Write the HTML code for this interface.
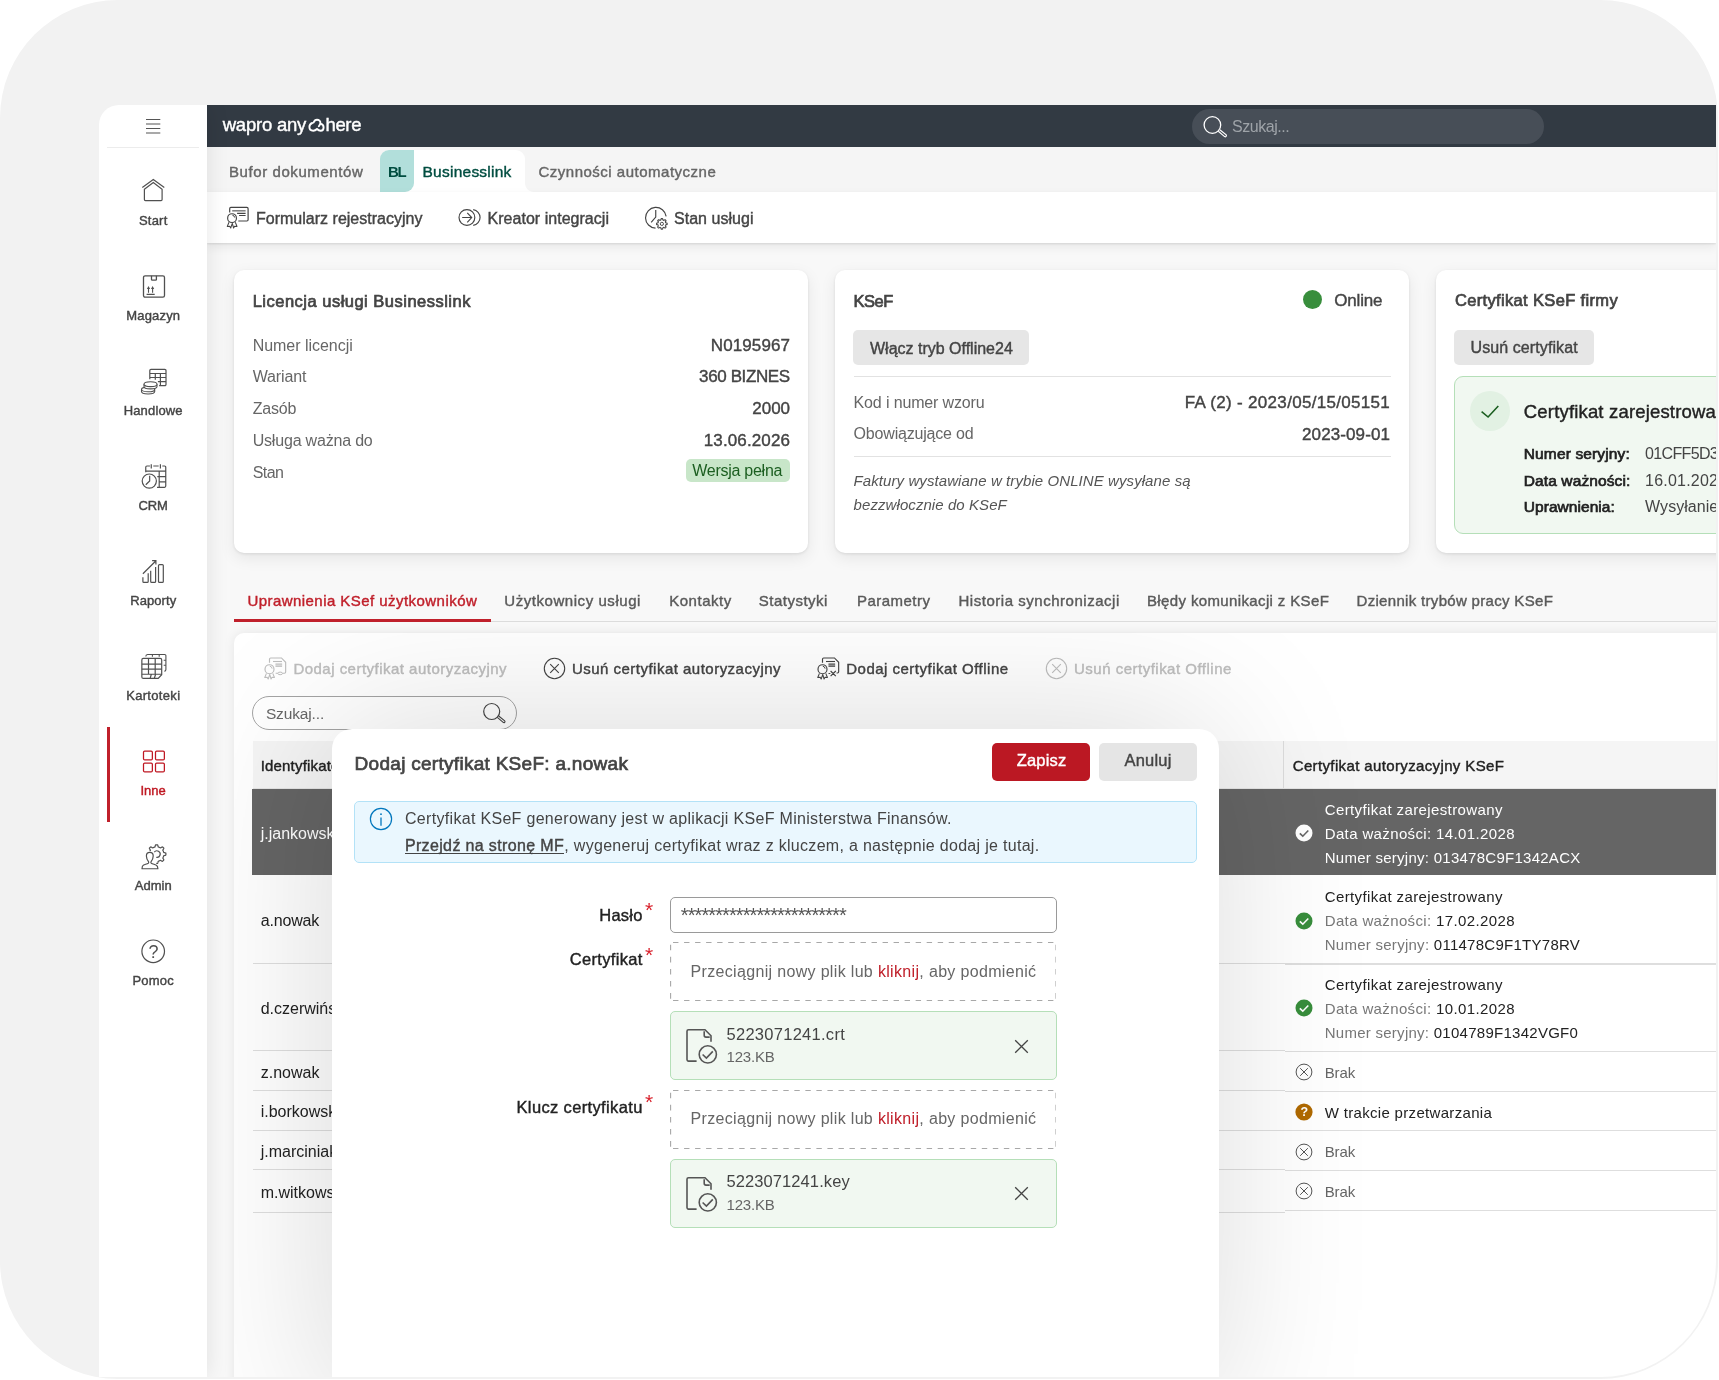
<!DOCTYPE html>
<html lang="pl">
<head>
<meta charset="utf-8">
<title>wapro anywhere - Businesslink</title>
<style>
html,body{margin:0;padding:0;background:#fff;}
body{width:1719px;height:1380px;overflow:hidden;font-family:"Liberation Sans",sans-serif;}
#frame{position:absolute;left:0;top:0;width:1717.6px;height:1378.6px;background:#f2f2f2;border-radius:118px;overflow:hidden;}
#app{position:absolute;left:0;top:0;width:1716px;height:1377px;will-change:transform;clip-path:inset(105px 0 0 99px round 20px 0 115px 0);}
.t{position:absolute;white-space:nowrap;line-height:1;font-family:"Liberation Sans",sans-serif;}
.t.m{-webkit-text-stroke:0.4px currentColor;}
.t.sb{-webkit-text-stroke:0.7px currentColor;}
.t.b{font-weight:bold;}
.m{-webkit-text-stroke:0.35px currentColor;}
.t.i{font-style:italic;}
.card{background:#fff;border-radius:10px;box-shadow:0 2px 10px rgba(0,0,0,0.10);}
.hr{position:absolute;height:1px;background:#e0e0e0;}

</style>
</head>
<body>
<div id="frame">
<div id="app">
<div style="position:absolute;left:207px;top:105px;width:1509px;height:1272px;background:#f8f8f8;"></div>
<div style="position:absolute;left:207px;top:105px;width:1509px;height:42px;background:#323a43;"></div>
<div style="position:absolute;left:207px;top:147px;width:1509px;height:45px;background:#f5f5f5;"></div>
<header>
<span class="t m" style="left:222.7px;letter-spacing:-0.219px;top:116px;font-size:18.5px;color:#fff;">wapro any</span>
<svg style="position:absolute;left:308px;top:118px;" width="17" height="14" viewBox="0 0 17 14" fill="none"><path d="M5.600 4.500C6.300 2.700 7.600 1.700 9 1.700c2 0 3.600 1.400 3.400 3.400-.100 1.200-.900 2.200-1.600 3.200" stroke="#fff" stroke-width="1.900" stroke-linecap="round"/><path d="M4.200 5C2.400 5.700 1.400 7.300 1.400 9.100c0 2.100 1.600 3.600 3.800 3.600 1.600 0 2.800-.700 3.800-1.700 1 1 2.200 1.700 3.600 1.700 1.800 0 3-1.500 3-3.300 0-1.800-1.100-3.200-2.700-3.600" stroke="#fff" stroke-width="1.900" stroke-linecap="round"/></svg>
<span class="t m" style="left:325.5px;letter-spacing:-0.352px;top:116px;font-size:18.5px;color:#fff;">here</span>
<div style="position:absolute;left:1192px;top:109px;width:352px;height:34.5px;background:#474e57;border-radius:17.500px;"></div>
<svg style="position:absolute;left:1201px;top:113px;" width="27" height="26" viewBox="0 0 27 26" fill="none"><circle cx="11.400" cy="12" r="8.300" stroke="#fff" stroke-width="1.300"/><path d="M17.300 18.300l6.300 5.300a1.200 1.200 0 0 0 1.600-1.700l-6.400-5.100" stroke="#fff" stroke-width="1.200"/></svg>
<span class="t" style="left:1232.0px;letter-spacing:-0.454px;top:119px;font-size:16px;color:#9ea3a8;">Szukaj...</span>
<span class="t m" style="left:229.0px;letter-spacing:0.576px;top:164px;font-size:15px;color:#666;">Bufor dokumentów</span>
<div style="position:absolute;left:380px;top:150px;width:145px;height:43px;background:#fff;border-radius:9px 9px 0 0;"></div>
<svg style="position:absolute;left:525px;top:183.4px;" width="9" height="9" viewBox="0 0 9 9" fill="none"><path d="M0 9V0c0 5 4 9 9 9z" fill="#fff"/></svg>
<div style="position:absolute;left:380px;top:150px;width:34px;height:42.4px;background:#b2dfdb;border-radius:9px 0 9px 0;"></div>
<span class="t b" style="left:388.0px;letter-spacing:-1.333px;top:164px;font-size:15px;color:#004d40;">BL</span>
<span class="t m" style="left:422.5px;letter-spacing:0.247px;top:164px;font-size:15.5px;color:#004d40;">Businesslink</span>
<span class="t m" style="left:538.5px;letter-spacing:0.500px;top:164px;font-size:15px;color:#666;">Czynności automatyczne</span>
<div style="position:absolute;left:207px;top:192.4px;width:1509px;height:50.4px;background:#fff;box-shadow:0 1px 2px rgba(0,0,0,0.10),0 4px 10px rgba(0,0,0,0.07);"></div>
<svg style="position:absolute;left:226px;top:205px;" width="26" height="25" viewBox="0 0 26 25" fill="none"><path d="M3.700 7.500V3.640a1.200 1.200 0 0 1 1.200-1.200h16a1.200 1.200 0 0 1 1.200 1.200V14.800a1.200 1.200 0 0 1-1.200 1.200H12.300" stroke="#444" stroke-width="1.200"/><path d="M6.200 5.800h13.400" stroke="#444" stroke-width="1.500" opacity=".7"/><path d="M11.100 8.360h8.500M13.100 10.500h6.500" stroke="#444" stroke-width="1.100"/><circle cx="6.04" cy="13.13" r="4.4" stroke="#444" stroke-width="1.150"/><path d="M6.34 10.13a2.700 2.700 0 0 1 2.300 2.400" stroke="#444" stroke-width="1"/><path d="M3 17.3l-1.700 4.100 2.400-.200 1 1.800 1.600-4.600 1.300 4.600 1-1.800 2.400.200-1.700-4.100" stroke="#444" stroke-width="1.050" stroke-linejoin="round"/></svg>
<span class="t m" style="left:256.0px;letter-spacing:0.010px;top:211px;font-size:16px;color:#444;">Formularz rejestracyjny</span>
<svg style="position:absolute;left:457px;top:207px;" width="26" height="22" viewBox="0 0 26 22" fill="none"><circle cx="9.920" cy="10.530" r="7.900" stroke="#444" stroke-width="1.150"/><path d="M5.170 10.530h9.400M10.260 5.780l4.440 4.750-4.440 4.900" stroke="#444" stroke-width="1.150"/><path d="M16.200 2.650A7.950 7.950 0 0 1 16.200 18.400" stroke="#444" stroke-width="1.150"/></svg>
<span class="t m" style="left:487.5px;letter-spacing:0.031px;top:211px;font-size:16px;color:#444;">Kreator integracji</span>
<svg style="position:absolute;left:644px;top:206px;" width="26" height="26" viewBox="0 0 26 26" fill="none"><path d="M11.500 22.100A10.350 10.350 0 1 1 22.150 10.400" stroke="#444" stroke-width="1.150"/><path d="M11.740 4.040v7.050L7.170 16.400" stroke="#444" stroke-width="1.150"/><path d="M23.17 17.87 L23.16 18.15 L23.14 18.42 L22.92 18.67 L22.27 18.80 L21.73 18.91 L21.67 19.11 L21.60 19.30 L21.52 19.50 L21.43 19.69 L21.33 19.87 L21.64 20.32 L22.01 20.88 L21.99 21.21 L21.81 21.42 L21.62 21.62 L21.42 21.81 L21.21 21.99 L20.88 22.01 L20.32 21.64 L19.87 21.33 L19.69 21.43 L19.50 21.52 L19.30 21.60 L19.11 21.67 L18.91 21.73 L18.80 22.27 L18.67 22.92 L18.42 23.14 L18.15 23.16 L17.87 23.17 L17.59 23.16 L17.32 23.14 L17.07 22.92 L16.94 22.27 L16.83 21.73 L16.63 21.67 L16.44 21.60 L16.24 21.52 L16.05 21.43 L15.87 21.33 L15.42 21.64 L14.86 22.01 L14.53 21.99 L14.32 21.81 L14.12 21.62 L13.93 21.42 L13.75 21.21 L13.73 20.88 L14.10 20.32 L14.41 19.87 L14.31 19.69 L14.22 19.50 L14.14 19.30 L14.07 19.11 L14.01 18.91 L13.47 18.80 L12.82 18.67 L12.60 18.42 L12.58 18.15 L12.57 17.87 L12.58 17.59 L12.60 17.32 L12.82 17.07 L13.47 16.94 L14.01 16.83 L14.07 16.63 L14.14 16.44 L14.22 16.24 L14.31 16.05 L14.41 15.87 L14.10 15.42 L13.73 14.86 L13.75 14.53 L13.93 14.32 L14.12 14.12 L14.32 13.93 L14.53 13.75 L14.86 13.73 L15.42 14.10 L15.87 14.41 L16.05 14.31 L16.24 14.22 L16.44 14.14 L16.63 14.07 L16.83 14.01 L16.94 13.47 L17.07 12.82 L17.32 12.60 L17.59 12.58 L17.87 12.57 L18.15 12.58 L18.42 12.60 L18.67 12.82 L18.80 13.47 L18.91 14.01 L19.11 14.07 L19.30 14.14 L19.50 14.22 L19.69 14.31 L19.87 14.41 L20.32 14.10 L20.88 13.73 L21.21 13.75 L21.42 13.93 L21.62 14.12 L21.81 14.32 L21.99 14.53 L22.01 14.86 L21.64 15.42 L21.33 15.87 L21.43 16.05 L21.52 16.24 L21.60 16.44 L21.67 16.63 L21.73 16.83 L22.27 16.94 L22.92 17.07 L23.14 17.32 L23.16 17.59Z" stroke="#444" stroke-width="1.100" stroke-linejoin="round" fill="#fff"/><circle cx="17.870" cy="17.870" r="1.600" stroke="#444" stroke-width=".95"/></svg>
<span class="t m" style="left:674.0px;letter-spacing:0.031px;top:211px;font-size:16px;color:#444;">Stan usługi</span>
</header>
<aside>
<div style="position:absolute;left:99px;top:105px;width:108px;height:1272px;background:#fff;box-shadow:0 0 22px rgba(0,0,0,0.10);"></div>
<nav>
<svg style="position:absolute;left:145px;top:118px;" width="16" height="16" viewBox="0 0 16 16" fill="none"><path d="M1 1.5h14.3M1 6h14.3M1 10.5h14.3M1 15h14.3" stroke="#555" stroke-width="1.1"/></svg>
<div style="position:absolute;left:107px;top:147.3px;width:92px;height:1.2px;background:#ececec;"></div>
<svg style="position:absolute;left:139px;top:176px;" width="28" height="28" viewBox="0 0 28 28" fill="none"><path d="M3.3 11.500L14.300 3.400l11 8.100" stroke="#505050" stroke-width="1.200"/><path d="M5.400 13.300l8.900-6.700 8.800 6.700v10.300a1 1 0 0 1-1 1H6.400a1 1 0 0 1-1-1z" stroke="#505050" stroke-width="1.200"/></svg>
<span class="t m" style="left:138.9px;letter-spacing:0.229px;top:214px;font-size:13px;color:#444;">Start</span>
<svg style="position:absolute;left:139px;top:272px;" width="28" height="28" viewBox="0 0 28 28" fill="none"><rect x="4.500" y="3.800" width="21" height="21.400" rx="1.600" stroke="#505050" stroke-width="1.300"/><path d="M12.500 3.800v3.600a.8.8 0 0 0 .8.8h3.300a.8.8 0 0 0 .8-.8V3.800" stroke="#505050" stroke-width="1.300"/><path d="M9.500 20.800v-4.500M13.600 20.800v-4.500M7.600 22.400h8.100" stroke="#505050" stroke-width="1.100"/><path d="M9.500 14l1.600 2.900H7.900zM13.600 14l1.600 2.900H12z" fill="#505050"/></svg>
<span class="t m" style="left:126.2px;letter-spacing:0.192px;top:309px;font-size:13px;color:#444;">Magazyn</span>
<svg style="position:absolute;left:139px;top:367px;" width="28" height="28" viewBox="0 0 28 28" fill="none"><path d="M10.800 12.300V3.600a1.200 1.200 0 0 1 1.200-1.200h13.800a1.200 1.200 0 0 1 1.200 1.200v13.800a1.200 1.200 0 0 1-1.200 1.200h-5.700M10.800 6.500H27M10.800 10.500H27M18.900 14.600H27M16.300 6.500v6.300M21.400 6.500v12.100" stroke="#505050" stroke-width="1.200"/><path d="M2.500 22.500v2.100c0 1.300 3 2.400 6.600 2.400s6.600-1.100 6.600-2.400v-2.100" stroke="#505050" stroke-width="1.100"/><ellipse cx="9.100" cy="22.400" rx="6.600" ry="2.300" stroke="#505050" stroke-width="1.100"/><path d="M5 17.200v2.300c0 1.300 2.900 2.400 6.500 2.400s6.500-1.100 6.500-2.400v-2.300" stroke="#505050" stroke-width="1.100" fill="#fff"/><ellipse cx="11.500" cy="17.200" rx="6.500" ry="2.400" stroke="#505050" stroke-width="1.100" fill="#fff"/></svg>
<span class="t m" style="left:123.7px;letter-spacing:0.156px;top:404px;font-size:13px;color:#444;">Handlowe</span>
<svg style="position:absolute;left:139px;top:462px;" width="28" height="28" viewBox="0 0 28 28" fill="none"><path d="M6.750 10.200V5.200A1.200 1.200 0 0 1 7.950 4h3M14.300 4h5.350M23.300 4h2.250a1.200 1.200 0 0 1 1.200 1.200v18.900a1.200 1.200 0 0 1-1.200 1.200H18M12.260 2.200v4.400M21.400 2.200v4.400M6.750 9.200h20M20.200 9.200v16.100M18.300 14.600h8.450M20.200 19.800h6.550" stroke="#505050" stroke-width="1.200"/><circle cx="10.300" cy="19.100" r="7.100" stroke="#505050" stroke-width="1.200"/><path d="M10.670 13.700v5.200l-3.900 3.800" stroke="#505050" stroke-width="1.200"/></svg>
<span class="t m" style="left:138.4px;letter-spacing:-0.044px;top:499px;font-size:13px;color:#444;">CRM</span>
<svg style="position:absolute;left:139px;top:557px;" width="28" height="28" viewBox="0 0 28 28" fill="none"><path d="M3.900 20.200v4.250a1 1 0 0 0 1 1h3.300a1 1 0 0 0 1-1V16.300M11.700 13.700v10.750a1 1 0 0 0 1 1h2.900a1 1 0 0 0 1-1V10.100" stroke="#505050" stroke-width="1.200"/><rect x="19.500" y="7.600" width="4.800" height="17.850" rx="1" stroke="#505050" stroke-width="1.200"/><path d="M3.900 16.700L16.500 4.200M13.100 3.700h3.800v3.700" stroke="#505050" stroke-width="1.200"/></svg>
<span class="t m" style="left:130.2px;letter-spacing:0.072px;top:594px;font-size:13px;color:#444;">Raporty</span>
<svg style="position:absolute;left:139px;top:652px;" width="28" height="28" viewBox="0 0 28 28" fill="none"><path d="M6.800 4.600c0-1.200.5-2.050 1.700-2.050h17.200a1.200 1.200 0 0 1 1.200 1.200v13.700c0 1-.6 1.700-1.600 1.750M13.400 2.550v2.200M20.200 2.550v2.200M24.700 8.200h2.200M24.700 13.300h2.200" stroke="#505050" stroke-width="1.100"/><path d="M4.350 6.460h16.850a1.500 1.500 0 0 1 1.500 1.500v14.700l-3.500 3.800H4.350a1.500 1.500 0 0 1-1.500-1.500V7.960a1.500 1.500 0 0 1 1.500-1.500z" stroke="#505050" stroke-width="1.200" fill="#fff"/><path d="M9.500 6.460v15.800M16.200 6.460v15.800M2.850 12.100H22.700M2.850 17.200H22.700M2.850 22.260H22.700M12.300 22.260l-1.100 4.200M16.600 22.260l-1.300 4.200" stroke="#505050" stroke-width="1.200"/></svg>
<span class="t m" style="left:126.2px;letter-spacing:0.316px;top:689px;font-size:13px;color:#444;">Kartoteki</span>
<div style="position:absolute;left:107px;top:727px;width:2.5px;height:95px;background:#c0202b;"></div>
<svg style="position:absolute;left:139px;top:746.5px;" width="28" height="28" viewBox="0 0 28 28" fill="none"><rect x="4.5" y="4" width="8.860" height="8.860" rx="1.200" stroke="#bf1722" stroke-width="1.250"/><rect x="4.5" y="16" width="8.860" height="8.860" rx="1.200" stroke="#bf1722" stroke-width="1.250"/><rect x="16.5" y="4" width="8.860" height="8.860" rx="1.200" stroke="#bf1722" stroke-width="1.250"/><rect x="16.5" y="16" width="8.860" height="8.860" rx="1.200" stroke="#bf1722" stroke-width="1.250"/></svg>
<span class="t m" style="left:140.4px;letter-spacing:0.054px;top:784px;font-size:13px;color:#bf1722;">Inne</span>
<svg style="position:absolute;left:139px;top:842px;" width="28" height="28" viewBox="0 0 28 28" fill="none"><path d="M3 26.750C3 24.500 3.300 23.600 4.600 23c1.400-.600 3.700-1.200 4.700-1.800.600-.400.500-1 .200-1.600C8.200 17.800 7.400 15.900 7.400 13.900c0-2.200 1.400-3.500 3.400-3.500s3.400 1.300 3.400 3.500c0 2-.800 3.900-2.100 5.700-.300.600-.400 1.200.200 1.600 1 .600 3.300 1.200 4.700 1.800 1.300.600 1.900 1.500 1.900 3.750z" stroke="#505050" stroke-width="1.200" stroke-linejoin="round"/><path d="M10.93 9.13 L10.98 9.01 L11.04 8.90 L11.10 8.79 L11.15 8.67 L11.22 8.56 L11.28 8.45 L11.34 8.34 L11.41 8.23 L11.32 8.02 L11.13 7.73 L10.94 7.44 L10.77 7.14 L10.60 6.83 L10.45 6.51 L10.37 6.25 L10.48 6.12 L10.58 6.00 L10.69 5.88 L10.80 5.76 L10.91 5.64 L11.02 5.52 L11.14 5.41 L11.26 5.30 L11.38 5.19 L11.50 5.08 L11.62 4.98 L11.75 4.87 L12.01 4.95 L12.33 5.10 L12.64 5.27 L12.94 5.44 L13.23 5.63 L13.52 5.82 L13.73 5.91 L13.84 5.84 L13.95 5.78 L14.06 5.72 L14.17 5.65 L14.29 5.60 L14.40 5.54 L14.51 5.48 L14.63 5.43 L14.75 5.38 L14.87 5.33 L14.98 5.28 L15.10 5.24 L15.22 5.20 L15.34 5.16 L15.47 5.12 L15.59 5.08 L15.71 5.05 L15.83 5.02 L15.96 4.99 L16.04 4.77 L16.11 4.44 L16.19 4.10 L16.28 3.76 L16.38 3.42 L16.49 3.09 L16.63 2.85 L16.79 2.84 L16.95 2.82 L17.11 2.81 L17.28 2.81 L17.44 2.80 L17.60 2.80 L17.76 2.80 L17.92 2.81 L18.09 2.81 L18.25 2.82 L18.41 2.84 L18.57 2.85 L18.71 3.09 L18.82 3.42 L18.92 3.76 L19.01 4.10 L19.09 4.44 L19.16 4.77 L19.24 4.99 L19.37 5.02 L19.49 5.05 L19.61 5.08 L19.73 5.12 L19.86 5.16 L19.98 5.20 L20.10 5.24 L20.22 5.28 L20.33 5.33 L20.45 5.38 L20.57 5.43 L20.69 5.48 L20.80 5.54 L20.91 5.60 L21.03 5.65 L21.14 5.72 L21.25 5.78 L21.36 5.84 L21.47 5.91 L21.68 5.82 L21.97 5.63 L22.26 5.44 L22.56 5.27 L22.87 5.10 L23.19 4.95 L23.45 4.87 L23.58 4.98 L23.70 5.08 L23.82 5.19 L23.94 5.30 L24.06 5.41 L24.18 5.52 L24.29 5.64 L24.40 5.76 L24.51 5.88 L24.62 6.00 L24.72 6.12 L24.83 6.25 L24.75 6.51 L24.60 6.83 L24.43 7.14 L24.26 7.44 L24.07 7.73 L23.88 8.02 L23.79 8.23 L23.86 8.34 L23.92 8.45 L23.98 8.56 L24.05 8.67 L24.10 8.79 L24.16 8.90 L24.22 9.01 L24.27 9.13 L24.32 9.25 L24.37 9.37 L24.42 9.48 L24.46 9.60 L24.50 9.72 L24.54 9.84 L24.58 9.97 L24.62 10.09 L24.65 10.21 L24.68 10.33 L24.71 10.46 L24.93 10.54 L25.26 10.61 L25.60 10.69 L25.94 10.78 L26.28 10.88 L26.61 10.99 L26.85 11.13 L26.86 11.29 L26.88 11.45 L26.89 11.61 L26.89 11.78 L26.90 11.94 L26.90 12.10 L26.90 12.26 L26.89 12.42 L26.89 12.59 L26.88 12.75 L26.86 12.91 L26.85 13.07 L26.61 13.21 L26.28 13.32 L25.94 13.42 L25.60 13.51 L25.26 13.59 L24.93 13.66 L24.71 13.74 L24.68 13.87 L24.65 13.99 L24.62 14.11 L24.58 14.23 L24.54 14.36 L24.50 14.48 L24.46 14.60 L24.42 14.72 L24.37 14.83 L24.32 14.95 L24.27 15.07 L24.22 15.19 L24.16 15.30 L24.10 15.41 L24.05 15.53 L23.98 15.64 L23.92 15.75 L23.86 15.86 L23.79 15.97 L23.88 16.18 L24.07 16.47 L24.26 16.76 L24.43 17.06 L24.60 17.37 L24.75 17.69 L24.83 17.95 L24.72 18.08 L24.62 18.20 L24.51 18.32 L24.40 18.44 L24.29 18.56 L24.18 18.68 L24.06 18.79 L23.94 18.90 L23.82 19.01 L23.70 19.12 L23.58 19.22 L23.45 19.33 L23.19 19.25 L22.87 19.10 L22.56 18.93 L22.26 18.76 L21.97 18.57 L21.68 18.38 L21.47 18.29 L21.36 18.36 L21.25 18.42 L21.14 18.48 L21.03 18.55 L20.91 18.60 L20.80 18.66 L20.69 18.72 L20.57 18.77 L20.45 18.82 L20.33 18.87 L20.22 18.92 L20.10 18.96 L19.98 19.00 L19.86 19.04 L19.73 19.08 L19.61 19.12 L19.49 19.15 L19.37 19.18 L19.24 19.21 L19.16 19.43 L19.09 19.76 L19.01 20.10 L18.92 20.44 L18.82 20.78 L18.71 21.11 L18.57 21.35 L18.41 21.36 L18.25 21.38 L18.09 21.39 L17.92 21.39 L17.76 21.40 L17.60 21.40 L17.44 21.40 L17.28 21.39" stroke="#505050" stroke-width="1.200" stroke-linejoin="round"/><path d="M15.300 10.100a3.300 3.300 0 1 1 2 5.300" stroke="#505050" stroke-width="1.200"/></svg>
<span class="t m" style="left:134.7px;letter-spacing:0.031px;top:879px;font-size:13px;color:#444;">Admin</span>
<svg style="position:absolute;left:139px;top:937px;" width="28" height="28" viewBox="0 0 28 28" fill="none"><circle cx="14.200" cy="14.300" r="11.300" stroke="#505050" stroke-width="1.200"/></svg>
<span class="t m" style="left:132.4px;letter-spacing:0.229px;top:974px;font-size:13px;color:#444;">Pomoc</span>
<span class="t" style="left:148.4px;top:943px;font-size:18px;color:#505050;">?</span>
</nav></aside>
<main>
<section>
<div style="position:absolute;left:234px;top:269.5px;width:574px;height:283px;background:#fff;border-radius:10px;box-shadow:0 1px 3px rgba(0,0,0,0.09),0 5px 16px rgba(0,0,0,0.08);"></div>
<span class="t sb" style="left:252.7px;letter-spacing:0.490px;top:293px;font-size:16.5px;color:#444;">Licencja usługi Businesslink</span>
<span class="t" style="left:252.7px;letter-spacing:-0.035px;top:338px;font-size:16px;color:#666;">Numer licencji</span>
<span class="t m" style="left:710.8px;letter-spacing:0.098px;top:337px;font-size:17px;color:#444;">N0195967</span>
<span class="t" style="left:252.7px;letter-spacing:-0.143px;top:369px;font-size:16px;color:#666;">Wariant</span>
<span class="t m" style="left:699.1px;letter-spacing:-0.379px;top:368px;font-size:17px;color:#444;">360 BIZNES</span>
<span class="t" style="left:252.7px;letter-spacing:-0.193px;top:401px;font-size:16px;color:#666;">Zasób</span>
<span class="t m" style="left:752.3px;letter-spacing:-0.037px;top:400px;font-size:17px;color:#444;">2000</span>
<span class="t" style="left:252.7px;letter-spacing:-0.190px;top:433px;font-size:16px;color:#666;">Usługa ważna do</span>
<span class="t m" style="left:703.8px;letter-spacing:0.116px;top:432px;font-size:17px;color:#444;">13.06.2026</span>
<span class="t" style="left:252.7px;letter-spacing:-0.549px;top:465px;font-size:16px;color:#666;">Stan</span>
<div style="position:absolute;left:686px;top:458.5px;width:104px;height:23.5px;background:#c8e6c9;border-radius:5px;"></div>
<span class="t" style="left:692.3px;letter-spacing:-0.269px;top:463px;font-size:16px;color:#1b5e20;">Wersja pełna</span>
<div style="position:absolute;left:835px;top:269.5px;width:574px;height:283px;background:#fff;border-radius:10px;box-shadow:0 1px 3px rgba(0,0,0,0.09),0 5px 16px rgba(0,0,0,0.08);"></div>
<span class="t sb" style="left:853.6px;letter-spacing:-0.509px;top:293px;font-size:16.5px;color:#444;">KSeF</span>
<div style="position:absolute;left:1302.5px;top:290.3px;width:19px;height:19px;background:#388e3c;border-radius:50%;"></div>
<span class="t m" style="left:1334.2px;letter-spacing:-0.171px;top:292px;font-size:17px;color:#444;">Online</span>
<div style="position:absolute;left:853.2px;top:330px;width:175.6px;height:34.5px;background:#e6e6e6;border-radius:5px;"></div>
<span class="t m" style="left:870.0px;letter-spacing:-0.004px;top:341px;font-size:16px;color:#444;">Włącz tryb Offline24</span>
<div style="position:absolute;left:853.5px;top:376px;width:537px;height:1px;background:#e2e2e2;"></div>
<span class="t" style="left:853.6px;letter-spacing:-0.145px;top:395px;font-size:16px;color:#666;">Kod i numer wzoru</span>
<span class="t m" style="left:1184.8px;letter-spacing:0.312px;top:394px;font-size:17px;color:#444;">FA (2) - 2023/05/15/05151</span>
<span class="t" style="left:853.6px;letter-spacing:-0.190px;top:426px;font-size:16px;color:#666;">Obowiązujące od</span>
<span class="t m" style="left:1302.0px;letter-spacing:0.109px;top:426px;font-size:17px;color:#444;">2023-09-01</span>
<div style="position:absolute;left:853.5px;top:456.3px;width:537px;height:1px;background:#e2e2e2;"></div>
<span class="t i" style="left:853.6px;letter-spacing:0.078px;top:473px;font-size:15px;color:#555;">Faktury wystawiane w trybie ONLINE wysyłane są</span>
<span class="t i" style="left:853.6px;letter-spacing:0.074px;top:497px;font-size:15px;color:#555;">bezzwłocznie do KSeF</span>
<div style="position:absolute;left:1436px;top:269.5px;width:324px;height:283px;background:#fff;border-radius:10px;box-shadow:0 1px 3px rgba(0,0,0,0.09),0 5px 16px rgba(0,0,0,0.08);"></div>
<span class="t sb" style="left:1454.9px;letter-spacing:0.348px;top:292px;font-size:16.5px;color:#444;">Certyfikat KSeF firmy</span>
<div style="position:absolute;left:1454.2px;top:330px;width:139.8px;height:34.5px;background:#e6e6e6;border-radius:5px;"></div>
<span class="t m" style="left:1470.5px;letter-spacing:0.096px;top:340px;font-size:16px;color:#444;">Usuń certyfikat</span>
<div style="position:absolute;left:1454.2px;top:375.7px;width:305.8px;height:158.6px;background:#f1f8f1;border:1px solid #b5dfb8;border-radius:9px;box-sizing:border-box;"></div>
<div style="position:absolute;left:1470px;top:391px;width:39.6px;height:39.6px;background:#e2f1e3;border-radius:50%;"></div>
<svg style="position:absolute;left:1479px;top:403px;" width="22" height="17" viewBox="0 0 22 17" fill="none"><path d="M2.600 8.700l6.500 5.300L19.300 3" stroke="#1b5e20" stroke-width="1.600"/></svg>
<span class="t m" style="left:1523.8px;letter-spacing:0.176px;top:403px;font-size:18.5px;color:#222;">Certyfikat zarejestrowany</span>
<span class="t sb" style="left:1523.8px;letter-spacing:0.132px;top:446px;font-size:15.5px;color:#222;">Numer seryjny:</span>
<span class="t" style="left:1645.1px;letter-spacing:-0.666px;top:446px;font-size:16px;color:#444;">01CFF5D3A7</span>
<span class="t sb" style="left:1523.8px;letter-spacing:0.103px;top:473px;font-size:15.5px;color:#222;">Data ważności:</span>
<span class="t" style="left:1645.1px;letter-spacing:0.202px;top:473px;font-size:16px;color:#444;">16.01.2028</span>
<span class="t sb" style="left:1523.8px;letter-spacing:0.046px;top:499px;font-size:15.5px;color:#222;">Uprawnienia:</span>
<span class="t" style="left:1645.1px;letter-spacing:0.049px;top:499px;font-size:16px;color:#444;">Wysyłanie faktur</span>
</section>
<section>
<div style="position:absolute;left:234px;top:621px;width:1482px;height:1px;background:#dcdcdc;"></div>
<div style="position:absolute;left:234px;top:618.8px;width:257px;height:3.2px;background:#c0202b;"></div>
<span class="t m" style="left:247.4px;letter-spacing:0.450px;top:593px;font-size:15px;color:#c0202b;">Uprawnienia KSef użytkowników</span>
<span class="t m" style="left:504.3px;letter-spacing:0.553px;top:593px;font-size:15px;color:#5a5a5a;">Użytkownicy usługi</span>
<span class="t m" style="left:669.2px;letter-spacing:0.523px;top:593px;font-size:15px;color:#5a5a5a;">Kontakty</span>
<span class="t m" style="left:758.8px;letter-spacing:0.486px;top:593px;font-size:15px;color:#5a5a5a;">Statystyki</span>
<span class="t m" style="left:856.9px;letter-spacing:0.484px;top:593px;font-size:15px;color:#5a5a5a;">Parametry</span>
<span class="t m" style="left:958.5px;letter-spacing:0.524px;top:593px;font-size:15px;color:#5a5a5a;">Historia synchronizacji</span>
<span class="t m" style="left:1147.0px;letter-spacing:0.366px;top:593px;font-size:15px;color:#5a5a5a;">Błędy komunikacji z KSeF</span>
<span class="t m" style="left:1356.5px;letter-spacing:0.317px;top:593px;font-size:15px;color:#5a5a5a;">Dziennik trybów pracy KSeF</span>
<div style="position:absolute;left:234px;top:632.5px;width:1526px;height:767.5px;background:#fff;border-radius:10px 0 0 0;box-shadow:0 0 12px rgba(0,0,0,0.08);"></div>
<svg style="position:absolute;left:262.54px;top:656px;" width="26" height="25" viewBox="0 0 26 25" fill="none"><path d="M6.500 6.800V3.160a1.200 1.200 0 0 1 1.200-1.200H18.460l4.200 4.300V16a1.200 1.200 0 0 1-1.200 1.200H19.500M14.800 17.200h-2.150" stroke="#bdbdbd" stroke-width="1.150"/><path d="M10 5.500h9" stroke="#bdbdbd" stroke-width="1.100"/><path d="M12.500 7.960h6.600M12.500 10.300h6.600" stroke="#bdbdbd" stroke-width="1.100"/><rect x="12.500" y="7.960" width="6.600" height="2.340" fill="#bdbdbd" opacity=".45"/><circle cx="6.5" cy="13.2" r="4.5" stroke="#bdbdbd" stroke-width="1.150"/><path d="M6.8 10.2a2.700 2.700 0 0 1 2.300 2.400" stroke="#bdbdbd" stroke-width="1"/><path d="M3.46 17.37l-1.700 4.100 2.400-.200 1 1.800 1.600-4.600 1.300 4.600 1-1.800 2.400.200-1.700-4.100" stroke="#bdbdbd" stroke-width="1.050" stroke-linejoin="round"/><ellipse cx="17.160" cy="17.400" rx="2.350" ry="1.300" stroke="#bdbdbd" stroke-width="1"/></svg>
<span class="t m" style="left:293.4px;letter-spacing:0.480px;top:661px;font-size:15px;color:#bdbdbd;">Dodaj certyfikat autoryzacyjny</span>
<svg style="position:absolute;left:542.8px;top:656.8px;" width="23" height="23" viewBox="0 0 23 23" fill="none"><circle cx="11.500" cy="11.500" r="10.200" stroke="#444" stroke-width="1.100"/><path d="M7.200 7.200l8.600 8.600M15.800 7.200l-8.600 8.600" stroke="#444" stroke-width="1.100"/></svg>
<span class="t m" style="left:571.9px;letter-spacing:0.485px;top:661px;font-size:15px;color:#444;">Usuń certyfikat autoryzacyjny</span>
<svg style="position:absolute;left:815.5px;top:656px;" width="26" height="25" viewBox="0 0 26 25" fill="none"><path d="M6.500 6.800V3.160a1.200 1.200 0 0 1 1.200-1.200H18.460l4.200 4.300V15.800a1.200 1.200 0 0 1-1.200 1.200h-.900" stroke="#444" stroke-width="1.150"/><path d="M10 5.500h9" stroke="#444" stroke-width="1.100"/><path d="M12.500 7.960h6.600M12.500 10.300h6.600" stroke="#444" stroke-width="1.100"/><rect x="12.500" y="7.960" width="6.600" height="2.340" fill="#444" opacity=".45"/><circle cx="6.5" cy="13.2" r="4.5" stroke="#444" stroke-width="1.150"/><path d="M6.8 10.2a2.700 2.700 0 0 1 2.300 2.400" stroke="#444" stroke-width="1"/><path d="M3.46 17.37l-1.700 4.100 2.400-.200 1 1.800 1.600-4.600 1.300 4.600 1-1.800 2.400.200-1.700-4.100" stroke="#444" stroke-width="1.050" stroke-linejoin="round"/><path d="M12.500 17.500h1.800M14.600 15l5.200 5.200M19.800 15l-5.200 5.200" stroke="#444" stroke-width="1.150"/></svg>
<span class="t m" style="left:846.3px;letter-spacing:0.484px;top:661px;font-size:15px;color:#444;">Dodaj certyfikat Offline</span>
<svg style="position:absolute;left:1044.7px;top:657px;" width="23" height="23" viewBox="0 0 23 23" fill="none"><circle cx="11.500" cy="11.500" r="10.200" stroke="#bdbdbd" stroke-width="1.100"/><path d="M7.200 7.200l8.600 8.600M15.800 7.200l-8.600 8.600" stroke="#bdbdbd" stroke-width="1.100"/></svg>
<span class="t m" style="left:1074.0px;letter-spacing:0.495px;top:661px;font-size:15px;color:#bdbdbd;">Usuń certyfikat Offline</span>
<div style="position:absolute;left:252.2px;top:696.3px;width:264.4px;height:34px;border:1.3px solid #a4a4a4;border-radius:17px;box-sizing:border-box;"></div>
<span class="t" style="left:265.9px;letter-spacing:-0.136px;top:706px;font-size:15.5px;color:#666;">Szukaj...</span>
<svg style="position:absolute;left:481.4px;top:701px;" width="27" height="25" viewBox="0 0 27 25" fill="none"><circle cx="10.700" cy="10.500" r="8" stroke="#444" stroke-width="1.200"/><path d="M16.300 16.400l5.900 5a1.100 1.100 0 0 0 1.500-1.600l-6-4.800" stroke="#444" stroke-width="1.100"/></svg>
<div style="position:absolute;left:252.5px;top:741px;width:1463.5px;height:47px;background:#f5f5f5;"></div>
<div style="position:absolute;left:252.5px;top:787.5px;width:1463.5px;height:1px;background:#e4e4e4;"></div>
<div style="position:absolute;left:1283px;top:741px;width:1px;height:47px;background:#dcdcdc;"></div>
<span class="t m" style="left:260.7px;letter-spacing:0.180px;top:758px;font-size:15px;color:#222;">Identyfikator użytkownika</span>
<span class="t m" style="left:1292.7px;letter-spacing:0.368px;top:758px;font-size:15px;color:#222;">Certyfikat autoryzacyjny KSeF</span>
<div style="position:absolute;left:252.3px;top:789.3px;width:1463.7px;height:85.4px;background:#656565;"></div>
<span class="t" style="left:260.7px;top:826px;font-size:16px;color:#fff;">j.jankowski</span>
<span class="t" style="left:260.7px;letter-spacing:-0.153px;top:913px;font-size:16px;color:#222;">a.nowak</span>
<span class="t" style="left:260.7px;top:1001px;font-size:16px;color:#222;">d.czerwiński</span>
<span class="t" style="left:260.7px;top:1065px;font-size:16px;color:#222;">z.nowak</span>
<span class="t" style="left:260.7px;top:1104px;font-size:16px;color:#222;">i.borkowski</span>
<span class="t" style="left:260.7px;top:1144px;font-size:16px;color:#222;">j.marciniak</span>
<span class="t" style="left:260.7px;top:1185px;font-size:16px;color:#222;">m.witkowski</span>
<div style="position:absolute;left:252.5px;top:962.7px;width:1032px;height:1.2px;background:#dedede;"></div>
<div style="position:absolute;left:1284.5px;top:963.4px;width:431.5px;height:1.2px;background:#dedede;"></div>
<div style="position:absolute;left:252.5px;top:1049.9px;width:1032px;height:1.2px;background:#dedede;"></div>
<div style="position:absolute;left:1284.5px;top:1050.8px;width:431.5px;height:1.2px;background:#dedede;"></div>
<div style="position:absolute;left:252.5px;top:1089.8px;width:1032px;height:1.2px;background:#dedede;"></div>
<div style="position:absolute;left:1284.5px;top:1090.6px;width:431.5px;height:1.2px;background:#dedede;"></div>
<div style="position:absolute;left:252.5px;top:1129.7px;width:1032px;height:1.2px;background:#dedede;"></div>
<div style="position:absolute;left:1284.5px;top:1130.2px;width:431.5px;height:1.2px;background:#dedede;"></div>
<div style="position:absolute;left:252.5px;top:1169.3px;width:1032px;height:1.2px;background:#dedede;"></div>
<div style="position:absolute;left:1284.5px;top:1169.8px;width:431.5px;height:1.2px;background:#dedede;"></div>
<div style="position:absolute;left:252.5px;top:1211.5px;width:1032px;height:1.2px;background:#dedede;"></div>
<div style="position:absolute;left:1284.5px;top:1209.8px;width:431.5px;height:1.2px;background:#dedede;"></div>
<svg style="position:absolute;left:1295.3px;top:824.1px;" width="18" height="18" viewBox="0 0 18 18" fill="none"><circle cx="9" cy="9" r="8.500" fill="#fff"/><path d="M4.800 9.300l3 2.900 5.500-5.700" stroke="#666" stroke-width="1.600"/></svg>
<span class="t" style="left:1324.7px;letter-spacing:0.392px;top:802px;font-size:15px;color:#fff;">Certyfikat zarejestrowany</span>
<span class="t" style="left:1324.7px;letter-spacing:0.369px;top:826px;font-size:15px;color:#fff;"><span style="color:#fff">Data ważności:</span> 14.01.2028</span>
<span class="t" style="left:1324.7px;letter-spacing:0.264px;top:850px;font-size:15px;color:#fff;"><span style="color:#fff">Numer seryjny:</span> 013478C9F1342ACX</span>
<svg style="position:absolute;left:1295.3px;top:911.6px;" width="18" height="18" viewBox="0 0 18 18" fill="none"><circle cx="9" cy="9" r="8.500" fill="#388e3c"/><path d="M4.800 9.300l3 2.900 5.500-5.700" stroke="#fff" stroke-width="1.600"/></svg>
<span class="t" style="left:1324.7px;letter-spacing:0.392px;top:889px;font-size:15px;color:#222;">Certyfikat zarejestrowany</span>
<span class="t" style="left:1324.7px;letter-spacing:0.369px;top:913px;font-size:15px;color:#222;"><span style="color:#777">Data ważności:</span> 17.02.2028</span>
<span class="t" style="left:1324.7px;letter-spacing:0.270px;top:937px;font-size:15px;color:#222;"><span style="color:#777">Numer seryjny:</span> 011478C9F1TY78RV</span>
<svg style="position:absolute;left:1295.3px;top:999.4px;" width="18" height="18" viewBox="0 0 18 18" fill="none"><circle cx="9" cy="9" r="8.500" fill="#388e3c"/><path d="M4.800 9.300l3 2.900 5.500-5.700" stroke="#fff" stroke-width="1.600"/></svg>
<span class="t" style="left:1324.7px;letter-spacing:0.392px;top:977px;font-size:15px;color:#222;">Certyfikat zarejestrowany</span>
<span class="t" style="left:1324.7px;letter-spacing:0.369px;top:1001px;font-size:15px;color:#222;"><span style="color:#777">Data ważności:</span> 10.01.2028</span>
<span class="t" style="left:1324.7px;letter-spacing:0.268px;top:1025px;font-size:15px;color:#222;"><span style="color:#777">Numer seryjny:</span> 0104789F1342VGF0</span>
<svg style="position:absolute;left:1295.3px;top:1063px;" width="18" height="18" viewBox="0 0 18 18" fill="none"><circle cx="9" cy="9" r="7.900" stroke="#555" stroke-width="1"/><path d="M5.200 5.200l7.600 7.600M12.800 5.200l-7.600 7.600" stroke="#555" stroke-width="1"/></svg>
<span class="t" style="left:1324.7px;letter-spacing:-0.098px;top:1065px;font-size:15px;color:#666;">Brak</span>
<svg style="position:absolute;left:1295.3px;top:1142.5px;" width="18" height="18" viewBox="0 0 18 18" fill="none"><circle cx="9" cy="9" r="7.900" stroke="#555" stroke-width="1"/><path d="M5.200 5.200l7.600 7.600M12.800 5.200l-7.600 7.600" stroke="#555" stroke-width="1"/></svg>
<span class="t" style="left:1324.7px;letter-spacing:-0.098px;top:1144px;font-size:15px;color:#666;">Brak</span>
<svg style="position:absolute;left:1295.3px;top:1182px;" width="18" height="18" viewBox="0 0 18 18" fill="none"><circle cx="9" cy="9" r="7.900" stroke="#555" stroke-width="1"/><path d="M5.200 5.200l7.600 7.600M12.800 5.200l-7.600 7.600" stroke="#555" stroke-width="1"/></svg>
<span class="t" style="left:1324.7px;letter-spacing:-0.098px;top:1184px;font-size:15px;color:#666;">Brak</span>
<svg style="position:absolute;left:1295.3px;top:1102.7px;" width="18" height="18" viewBox="0 0 18 18" fill="none"><circle cx="9" cy="9" r="8.600" fill="#b06a00"/></svg>
<span class="t b" style="left:1300.6px;top:1106px;font-size:12.5px;color:#fff;">?</span>
<span class="t" style="left:1324.7px;letter-spacing:0.322px;top:1105px;font-size:15px;color:#222;">W trakcie przetwarzania</span>
</section>
<div style="position:absolute;left:0;top:0;width:1716px;height:1377px;clip-path:inset(632.5px 0 0 234px round 10px 0 0 0);">
<div role="dialog" aria-label="Dodaj certyfikat KSeF">
<div style="position:absolute;left:331.7px;top:729px;width:887.8px;height:691px;background:#fff;border-radius:20px 20px 0 0;box-shadow:-6px -4px 160px rgba(0,0,0,0.15);"></div>
<span class="t sb" style="left:354.6px;letter-spacing:0.285px;top:754px;font-size:19px;color:#444;">Dodaj certyfikat KSeF: a.nowak</span>
<div style="position:absolute;left:992.3px;top:742.9px;width:97.9px;height:37.9px;background:#bb1823;border-radius:5px;"></div>
<span class="t m" style="left:1016.7px;letter-spacing:0.180px;top:752px;font-size:16.5px;color:#fff;">Zapisz</span>
<div style="position:absolute;left:1099.2px;top:742.9px;width:97.6px;height:37.9px;background:#e5e5e5;border-radius:5px;"></div>
<span class="t m" style="left:1124.5px;letter-spacing:0.205px;top:752px;font-size:16.5px;color:#444;">Anuluj</span>
<div style="position:absolute;left:354.2px;top:800.8px;width:842.8px;height:62px;background:#eaf7fe;border:1.2px solid #b3e2f7;border-radius:5px;box-sizing:border-box;"></div>
<svg style="position:absolute;left:368.5px;top:807px;" width="24" height="24" viewBox="0 0 24 24" fill="none"><circle cx="12" cy="12" r="10.600" stroke="#0277bd" stroke-width="1.200"/><path d="M12 10.400v8.300" stroke="#0277bd" stroke-width="1.300"/><circle cx="12" cy="7.200" r=".9" fill="#0277bd"/></svg>
<span class="t" style="left:405.0px;letter-spacing:0.311px;top:811px;font-size:16px;color:#444;">Certyfikat KSeF generowany jest w aplikacji KSeF Ministerstwa Finansów.</span>
<span class="t m" style="left:404.9px;letter-spacing:0.356px;top:838px;font-size:16px;color:#444;">Przejdź na stronę MF</span>
<div style="position:absolute;left:404.5px;top:853px;width:159.2px;height:1.2px;background:#444;"></div>
<span class="t" style="left:564.3px;letter-spacing:0.300px;top:838px;font-size:16px;color:#444;">, wygeneruj certyfikat wraz z kluczem, a następnie dodaj je tutaj.</span>
<span class="t m" style="left:599.3px;letter-spacing:0.225px;top:907px;font-size:16.5px;color:#222;">Hasło</span>
<span class="t" style="left:645.1px;top:899px;font-size:21px;color:#d9232e;">*</span>
<div style="position:absolute;left:670px;top:896.9px;width:386.6px;height:35.9px;border:1.2px solid #9a9a9a;border-radius:5px;box-sizing:border-box;background:#fff;"></div>
<span class="t" style="left:680.8px;letter-spacing:-0.906px;top:905px;font-size:20px;color:#555;">************************</span>
<span class="t m" style="left:569.8px;letter-spacing:0.317px;top:951px;font-size:16.5px;color:#222;">Certyfikat</span>
<span class="t" style="left:645.1px;top:944px;font-size:21px;color:#d9232e;">*</span>
<svg style="position:absolute;left:669.9px;top:942px;" width="386.6" height="59.2" viewBox="0 0 386.6 59.2" fill="none"><path d="M3 .55H383.6" stroke="#a8a8a8" stroke-width="1.100" stroke-dasharray="5.400 5.630"/><path d="M3 58.65H383.6" stroke="#a8a8a8" stroke-width="1.100" stroke-dasharray="5.400 5.630"/><path d="M.55 2.700V57.2" stroke="#a8a8a8" stroke-width="1.100" stroke-dasharray="5.600 6.500"/><path d="M386.05 2.700V57.2" stroke="#a8a8a8" stroke-width="1.100" stroke-dasharray="5.600 6.500"/></svg>
<span class="t" style="left:690.5px;letter-spacing:0.332px;top:964px;font-size:16px;color:#666;">Przeciągnij nowy plik lub <span style="color:#c0202b">kliknij</span>, aby podmienić</span>
<div style="position:absolute;left:669.9px;top:1011.2px;width:386.7px;height:69.2px;background:#f1f8f1;border:1.2px solid #b5dfb8;border-radius:5px;box-sizing:border-box;"></div>
<svg style="position:absolute;left:685px;top:1029.2px;" width="33" height="35" viewBox="0 0 33 35" fill="none"><path d="M11.600 32.100H3.500c-.8 0-1.500-.7-1.500-1.500V2.300c0-.8.7-1.500 1.500-1.500h16.500l6 6v5.900" stroke="#555" stroke-width="1.600"/><path d="M19.200 2.300v4c0 1 .8 1.800 1.800 1.800h3.700" stroke="#555" stroke-width="1.600"/><circle cx="22.800" cy="25.400" r="8.600" stroke="#555" stroke-width="1.600"/><path d="M17.600 25.500l3.800 3.600 6.400-6.700" stroke="#555" stroke-width="1.600"/></svg>
<span class="t" style="left:726.5px;letter-spacing:0.275px;top:1026px;font-size:16.5px;color:#444;">5223071241.crt</span>
<span class="t" style="left:726.5px;letter-spacing:-0.185px;top:1049px;font-size:15px;color:#666;">123.KB</span>
<svg style="position:absolute;left:1014px;top:1038.5px;" width="15" height="15" viewBox="0 0 15 15" fill="none"><path d="M1.200 1.200l12.600 12.600M13.800 1.200L1.200 13.800" stroke="#444" stroke-width="1.300"/></svg>
<span class="t m" style="left:516.5px;letter-spacing:0.356px;top:1099px;font-size:16.5px;color:#222;">Klucz certyfikatu</span>
<span class="t" style="left:645.1px;top:1091px;font-size:21px;color:#d9232e;">*</span>
<svg style="position:absolute;left:669.9px;top:1089.6px;" width="386.6" height="59.2" viewBox="0 0 386.6 59.2" fill="none"><path d="M3 .55H383.6" stroke="#a8a8a8" stroke-width="1.100" stroke-dasharray="5.400 5.630"/><path d="M3 58.65H383.6" stroke="#a8a8a8" stroke-width="1.100" stroke-dasharray="5.400 5.630"/><path d="M.55 2.700V57.2" stroke="#a8a8a8" stroke-width="1.100" stroke-dasharray="5.600 6.500"/><path d="M386.05 2.700V57.2" stroke="#a8a8a8" stroke-width="1.100" stroke-dasharray="5.600 6.500"/></svg>
<span class="t" style="left:690.5px;letter-spacing:0.332px;top:1111px;font-size:16px;color:#666;">Przeciągnij nowy plik lub <span style="color:#c0202b">kliknij</span>, aby podmienić</span>
<div style="position:absolute;left:669.9px;top:1159.2px;width:386.7px;height:69px;background:#f1f8f1;border:1.2px solid #b5dfb8;border-radius:5px;box-sizing:border-box;"></div>
<svg style="position:absolute;left:685px;top:1177.2px;" width="33" height="35" viewBox="0 0 33 35" fill="none"><path d="M11.600 32.100H3.500c-.8 0-1.500-.7-1.500-1.500V2.300c0-.8.7-1.500 1.500-1.500h16.500l6 6v5.900" stroke="#555" stroke-width="1.600"/><path d="M19.200 2.300v4c0 1 .8 1.800 1.800 1.800h3.700" stroke="#555" stroke-width="1.600"/><circle cx="22.800" cy="25.400" r="8.600" stroke="#555" stroke-width="1.600"/><path d="M17.600 25.500l3.800 3.600 6.400-6.700" stroke="#555" stroke-width="1.600"/></svg>
<span class="t" style="left:726.5px;letter-spacing:0.087px;top:1173px;font-size:16.5px;color:#444;">5223071241.key</span>
<span class="t" style="left:726.5px;letter-spacing:-0.185px;top:1197px;font-size:15px;color:#666;">123.KB</span>
<svg style="position:absolute;left:1014px;top:1186.2px;" width="15" height="15" viewBox="0 0 15 15" fill="none"><path d="M1.200 1.200l12.600 12.600M13.800 1.200L1.200 13.800" stroke="#444" stroke-width="1.300"/></svg>
</div>
</div>
</main>
</div>
</div>
</body>
</html>
